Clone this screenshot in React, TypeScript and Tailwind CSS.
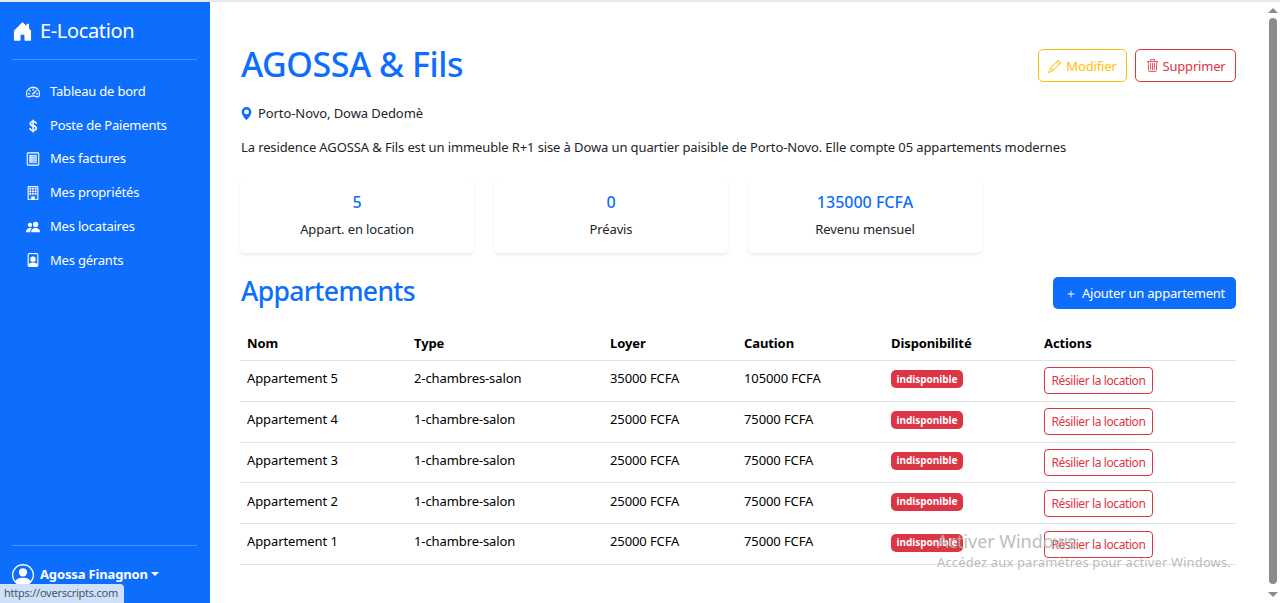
import {
  BsBuilding,
  BsCurrencyDollar,
  BsFilePerson,
  BsGeoAltFill,
  BsHouseDoorFill,
  BsPencil,
  BsPeopleFill,
  BsPersonCircle,
  BsPlus,
  BsSpeedometer2,
  BsTrash3,
} from 'react-icons/bs';

function InvoiceIcon({ className }: { className?: string }) {
  return (
    <svg viewBox="0 0 14 14" fill="none" stroke="currentColor" className={className}>
      <rect x="1.25" y="0.9" width="11.5" height="12.2" rx="0.8" strokeWidth="1.1" />
      <rect x="3" y="3" width="8" height="7.6" fill="currentColor" fillOpacity="0.55" stroke="none" />
      <path d="M3 3.4h8M3 5.8h8M3 8.2h8M3 10.6h8M5 3v7.6" strokeWidth="0.6" />
    </svg>
  );
}

const navItems = [
  { label: 'Tableau de bord', icon: BsSpeedometer2, iconClass: 'stroke-[0.3]' },
  { label: 'Poste de Paiements', icon: BsCurrencyDollar, iconClass: 'stroke-[0.7]' },
  { label: 'Mes factures', icon: InvoiceIcon, iconClass: '' },
  { label: 'Mes propriétés', icon: BsBuilding, iconClass: 'stroke-[0.3]' },
  { label: 'Mes locataires', icon: BsPeopleFill, iconClass: '' },
  { label: 'Mes gérants', icon: BsFilePerson, iconClass: 'stroke-[0.3]' },
];

const stats = [
  { value: '5', label: 'Appart. en location' },
  { value: '0', label: 'Préavis' },
  { value: '135000 FCFA', label: 'Revenu mensuel' },
];

const apartments = [
  { name: 'Appartement 5', type: '2-chambres-salon', rent: '35000 FCFA', deposit: '105000 FCFA' },
  { name: 'Appartement 4', type: '1-chambre-salon', rent: '25000 FCFA', deposit: '75000 FCFA' },
  { name: 'Appartement 3', type: '1-chambre-salon', rent: '25000 FCFA', deposit: '75000 FCFA' },
  { name: 'Appartement 2', type: '1-chambre-salon', rent: '25000 FCFA', deposit: '75000 FCFA' },
  { name: 'Appartement 1', type: '1-chambre-salon', rent: '25000 FCFA', deposit: '75000 FCFA' },
];

function Sidebar() {
  return (
    <aside className="flex w-[210px] shrink-0 flex-col bg-[#0d6efd] px-3 text-white">
      <a href="#" className="mt-[13px] flex h-8 items-center gap-[7px] text-[20px] tracking-[-0.35px]">
        <BsHouseDoorFill className="size-[21px]" />
        <span>E-Location</span>
      </a>
      <hr className="mt-3 mr-px border-white/25" />
      <ul className="mt-[15px] flex-1">
        {navItems.map(({ label, icon: Icon, iconClass }) => (
          <li key={label}>
            <a href="#" className="flex h-[33.7px] items-center pl-[14px] text-[13px] tracking-[-0.2px]">
              <Icon className={`mr-[10px] size-[14px] ${iconClass}`} />
              <span>{label}</span>
            </a>
          </li>
        ))}
      </ul>
      <hr className="mr-px border-white/25" />
      <button
        type="button"
        className="mt-[14px] mb-[14px] flex h-[29px] items-center text-[13px] font-bold tracking-[-0.15px]"
      >
        <BsPersonCircle className="mr-[6px] size-[22px]" />
        <span>Agossa Finagnon</span>
        <span className="mb-px ml-[3px] border-x-4 border-t-4 border-x-transparent border-t-white" />
      </button>
    </aside>
  );
}

function ApartmentTable() {
  return (
    <table className="mt-4 w-full table-fixed border-collapse text-[13px] tracking-[-0.1px] text-black">
      <colgroup>
        <col className="w-[167px]" />
        <col className="w-[196px]" />
        <col className="w-[134px]" />
        <col className="w-[147px]" />
        <col className="w-[153px]" />
        <col />
      </colgroup>
      <thead>
        <tr className="h-[35.5px] border-b border-[#dee2e6] text-left">
          <th className="px-[7px] pt-[2px]">Nom</th>
          <th className="px-[7px] pt-[2px]">Type</th>
          <th className="px-[7px] pt-[2px]">Loyer</th>
          <th className="px-[7px] pt-[2px]">Caution</th>
          <th className="px-[7px] pt-[2px]">Disponibilité</th>
          <th className="px-[7px] pt-[2px]">Actions</th>
        </tr>
      </thead>
      <tbody>
        {apartments.map((apartment) => (
          <tr key={apartment.name} className="h-[40.8px] border-b border-[#dee2e6]">
            <td className="px-[7px] pb-1">{apartment.name}</td>
            <td className="px-[7px] pb-1">{apartment.type}</td>
            <td className="px-[7px] pb-1">{apartment.rent}</td>
            <td className="px-[7px] pb-1">{apartment.deposit}</td>
            <td className="px-[7px] pb-[3px]">
              <span className="flex h-[18px] w-[72px] items-center justify-center rounded-[5px] bg-[#dc3545] text-[10px] font-bold tracking-normal text-white">
                indisponible
              </span>
            </td>
            <td className="px-[7px]">
              <button
                type="button"
                className="flex h-[27px] w-[109px] items-center justify-center rounded-[4px] border border-[#dc3545] pt-px text-[12px] tracking-[-0.4px] whitespace-nowrap text-[#dc3545]"
              >
                Résilier la location
              </button>
            </td>
          </tr>
        ))}
      </tbody>
    </table>
  );
}

function Scrollbar() {
  return (
    <div className="flex w-[14px] shrink-0 flex-col items-center pt-[6px] pb-[6px]">
      <span className="border-x-[5px] border-b-[5px] border-x-transparent border-b-[#8b8b8b]" />
      <span className="mt-[5px] mb-[8px] w-2 flex-1 rounded-full bg-[#8b8b8b]" />
      <span className="border-x-[5px] border-t-[5px] border-x-transparent border-t-[#8b8b8b]" />
    </div>
  );
}

export default function App() {
  return (
    <div className="relative flex h-[603px] w-[1280px] overflow-hidden border-t-2 border-[#e6e8ec] bg-white font-['Noto_Sans','Open_Sans',sans-serif] text-[13px] text-[#212529]">
      <Sidebar />

      <main className="flex-1 pr-[30px] pl-[30px]">
        <div className="mt-[36px] flex items-center justify-between">
          <h1 className="pb-[2px] pl-px text-[34px] leading-[52px] font-medium tracking-[-0.48px] text-[#0d6efd]">
            AGOSSA &amp; Fils
          </h1>
          <div className="mt-px flex gap-2 tracking-[-0.15px]">
            <button
              type="button"
              className="flex h-[33px] w-[89px] items-center justify-center gap-[5px] rounded-[5px] border border-[#ffc107] pt-[2px] text-[#ffc107]"
            >
              <BsPencil className="mb-px size-[13px]" />
              Modifier
            </button>
            <button
              type="button"
              className="flex h-[33px] w-[101px] items-center justify-center gap-1 rounded-[5px] border border-[#dc3545] pt-[2px] tracking-[-0.2px] text-[#dc3545]"
            >
              <BsTrash3 className="mb-[3px] size-[13px]" />
              Supprimer
            </button>
          </div>
        </div>

        <p className="mt-[12px] flex h-5 items-center gap-[5px] tracking-[-0.08px]">
          <BsGeoAltFill className="mb-px size-[13px] text-[#0d6efd]" />
          Porto-Novo, Dowa Dedomè
        </p>
        <p className="mt-[13px] h-5 pl-px leading-5 tracking-[-0.112px] whitespace-nowrap">
          La residence AGOSSA &amp; Fils est un immeuble R+1 sise à Dowa un quartier paisible de Porto-Novo. Elle compte
          05 appartements modernes
        </p>

        <div className="mt-[21px] grid grid-cols-4 gap-5">
          {stats.map((stat) => (
            <div
              key={stat.label}
              className="h-[75px] rounded-[5px] bg-white pt-[14px] text-center shadow-[0_2px_3px_rgba(0,0,0,0.075)]"
            >
              <div className="text-[16px] leading-5 font-medium text-[#0d6efd]">{stat.value}</div>
              <div className="mt-[7px] leading-5 tracking-[-0.12px]">{stat.label}</div>
            </div>
          ))}
        </div>

        <div className="mt-[20px] flex items-center justify-between">
          <h2 className="pl-px text-[26.5px] leading-[36px] font-medium tracking-[-0.65px] text-[#0d6efd]">
            Appartements
          </h2>
          <button
            type="button"
            className="mt-1 flex h-8 w-[183px] items-center justify-center gap-1 rounded-[5px] bg-[#0d6efd] pt-px tracking-[-0.22px] text-white"
          >
            <BsPlus className="size-[14px]" />
            Ajouter un appartement
          </button>
        </div>

        <ApartmentTable />
      </main>

      <Scrollbar />

      <div className="absolute top-[527px] left-[937px] text-[#b4b4b4]/90">
        <p className="text-[18px] leading-6 tracking-[-0.05px]">Activer Windows</p>
        <p className="text-[13px] leading-[18px] tracking-[0.13px] whitespace-nowrap">
          Accédez aux paramètres pour activer Windows.
        </p>
      </div>

      <div className="absolute bottom-0 left-0 flex h-[19px] w-[124px] items-center rounded-tr-[4px] bg-[#cfe0fa] pl-1 text-[11px] tracking-[-0.25px] text-[#4b5563]">
        https://overscripts.com
      </div>
    </div>
  );
}
